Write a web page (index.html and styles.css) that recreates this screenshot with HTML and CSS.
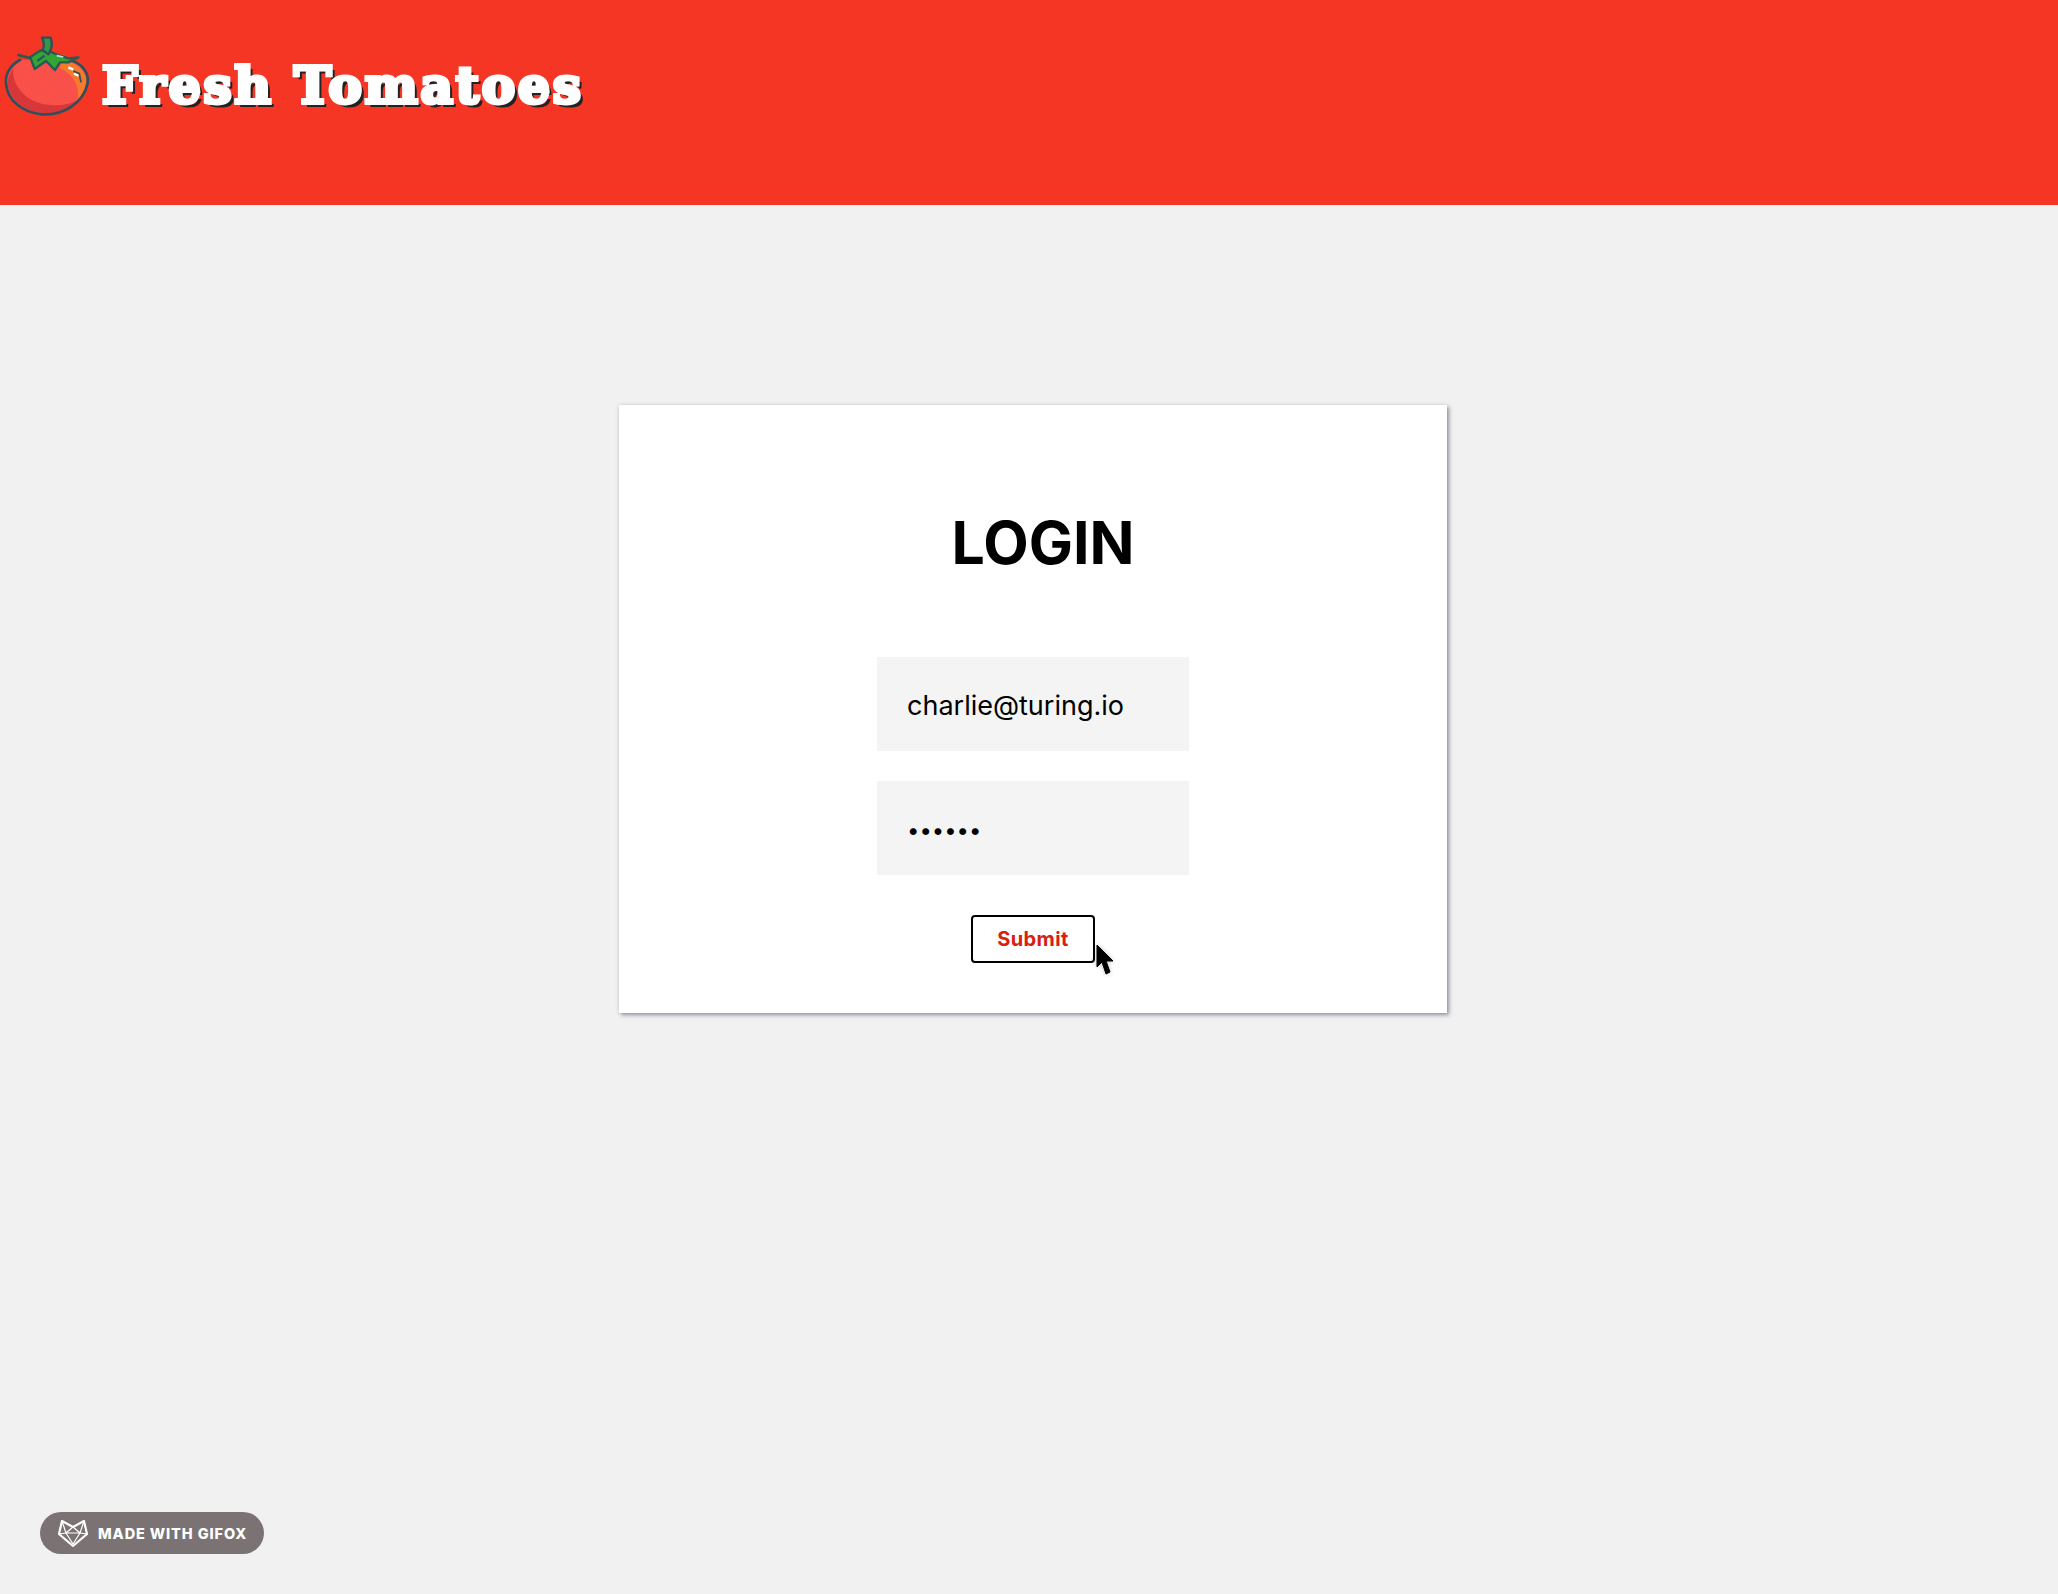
FILE: index.html
```html
<!DOCTYPE html>
<html lang="en">
<head>
    <meta charset="UTF-8">
    <meta name="viewport" content="width=device-width, initial-scale=1.0">
    <title>Fresh Tomatoes</title>
    <link rel="stylesheet" href="styles.css">
</head>
<body>
    <header class="site-header">
        <svg class="logo" viewBox="0 0 300 300" aria-hidden="true">
            <path d="M60 105 C30 120 15 150 18 175 C22 225 65 262 125 268 C190 272 250 235 263 175 C268 140 240 110 205 105 Z" fill="#f9504a"/>
            <path d="M40 130 C25 150 20 170 25 190 C40 235 80 260 125 264 C170 268 205 255 235 225 C190 250 120 245 80 215 C55 195 35 165 40 130 Z" fill="#d8373a"/>
            <path d="M185 108 C225 108 262 135 258 175 C255 195 245 212 232 225 C240 190 225 150 180 130 Z" fill="#f47b2c"/>
            <path d="M60 105 C30 120 15 150 18 175 C22 225 65 262 125 268 C190 272 250 235 263 175 C268 140 240 110 205 105" fill="none" stroke="#2f4f5a" stroke-width="8" stroke-linecap="round"/>
            <path d="M205 127 L220 134 M222 146 L236 152" fill="none" stroke="#fff" stroke-width="7"/>
            <path d="M220 138 L238 146 L243 172" fill="none" stroke="#2f4f5a" stroke-width="5"/>
            <path d="M55 90 L88 98 L122 76 L150 80 L175 90 L205 100 L235 97 L205 112 L180 112 L165 135 L138 108 L104 132 L92 100 Z" fill="#33a535" stroke="#2a5a52" stroke-width="7" stroke-linejoin="round"/>
            <path d="M128 75 C134 62 132 50 126 38 L152 38 C158 55 154 75 145 88 Z" fill="#2f9a45" stroke="#2f4f5a" stroke-width="7" stroke-linejoin="round"/>
            <path d="M112 108 L134 92" stroke="#2a5a52" stroke-width="7"/>
            <path d="M170 92 L190 96" stroke="#b6e3c4" stroke-width="5"/>
        </svg>
        <h1 class="brand">Fresh Tomatoes</h1>
    </header>

    <main class="page">
        <section class="card">
            <h2 class="card-title">LOGIN</h2>
            <form class="login-form">
                <input class="field" type="email" value="charlie@turing.io">
                <input class="field field-password" type="password" value="secret">
                <div class="submit-wrap">
                    <button class="submit" type="submit">Submit</button>
                    <svg class="pointer" viewBox="0 0 24 34" aria-hidden="true">
                        <path d="M2 2 L2 24 L7 19 L11 31 L15 29 L11 18 L18 18 Z" fill="#000" stroke="#000" stroke-width="1" stroke-linejoin="round"/>
                    </svg>
                </div>
            </form>
        </section>
    </main>

    <div class="gifox">
        <svg class="gifox-icon" viewBox="0 0 30 27" aria-hidden="true">
            <path d="M4 1 L15 7 L26 1 L29 14 L15 26 L1 14 Z" fill="none" stroke="#fff" stroke-width="2.2" stroke-linejoin="round"/>
            <path d="M4 1 L8 13 L15 7 L22 13 L26 1 M8 13 L22 13 L15 24 Z M1 14 L8 13 M29 14 L22 13" fill="none" stroke="#fff" stroke-width="1.2" stroke-linejoin="round"/>
        </svg>
        <span>MADE WITH GIFOX</span>
    </div>
</body>
</html>
```

FILE: styles.css
```css
html, body {
    height: 100%;
}
body {
    margin: 0;
    height: 1594px;
    overflow: hidden;
    position: relative;
    background-color: #f1f1f1;
    font-family: Inter, Arial, sans-serif;
}
.site-header {
    display: flex;
    align-items: flex-start;
    gap: 2px;
    height: 205px;
    box-sizing: border-box;
    padding-top: 25px;
    background-color: #f53625;
}
.logo {
    width: 100px;
    height: 100px;
}
.brand {
    margin: 31px 0 0;
    font-family: "DejaVu Serif", serif;
    font-size: 50px;
    font-weight: 700;
    line-height: 60px;
    letter-spacing: 2.9px;
    color: #fff;
    -webkit-text-stroke: 4px #fff;
    text-shadow: 4px 4px 0 #222;
}
.page {
    display: flex;
    justify-content: center;
    padding: 200px 0 0 8px;
}
.card {
    width: 828px;
    height: 608px;
    box-sizing: border-box;
    padding-top: 100px;
    background-color: #fff;
    box-shadow: 2px 2px 4px rgba(90, 85, 110, 0.6), 0 0 4px rgba(0, 0, 0, 0.1);
}
.card-title {
    margin: 0 0 0 20px;
    text-align: center;
    font-size: 59px;
    font-weight: 700;
    line-height: 76px;
    color: #000;
}
.login-form {
    display: flex;
    flex-direction: column;
    align-items: center;
    gap: 30px;
    margin-top: 76px;
}
.field {
    width: 312px;
    height: 94px;
    box-sizing: border-box;
    padding: 2px 30px 0;
    border: none;
    background-color: #f4f4f4;
    font-family: Inter, Arial, sans-serif;
    font-size: 27px;
    color: #000;
}
.field-password {
    padding-top: 4px;
    font-size: 22px;
}
.submit-wrap {
    position: relative;
    margin-top: 10px;
}
.submit {
    display: block;
    width: 124px;
    height: 48px;
    padding: 0;
    background-color: #fff;
    border: 2px solid #000;
    border-radius: 4px;
    font-family: Inter, Arial, sans-serif;
    font-size: 20px;
    font-weight: 700;
    letter-spacing: 0.4px;
    color: #d92010;
}
.pointer {
    position: absolute;
    left: 124px;
    top: 28px;
    width: 24px;
    height: 34px;
    filter: drop-shadow(0 0 2px rgba(0, 0, 0, 0.25));
}
.gifox {
    position: absolute;
    left: 40px;
    top: 1512px;
    display: flex;
    align-items: center;
    gap: 10px;
    width: 224px;
    height: 42px;
    box-sizing: border-box;
    padding-left: 18px;
    border-radius: 21px;
    background-color: #7b7373;
    font-family: Inter, sans-serif;
    font-size: 14.5px;
    font-weight: 800;
    letter-spacing: 0.9px;
    color: #fff;
}
.gifox-icon {
    width: 30px;
    height: 27px;
}
```
